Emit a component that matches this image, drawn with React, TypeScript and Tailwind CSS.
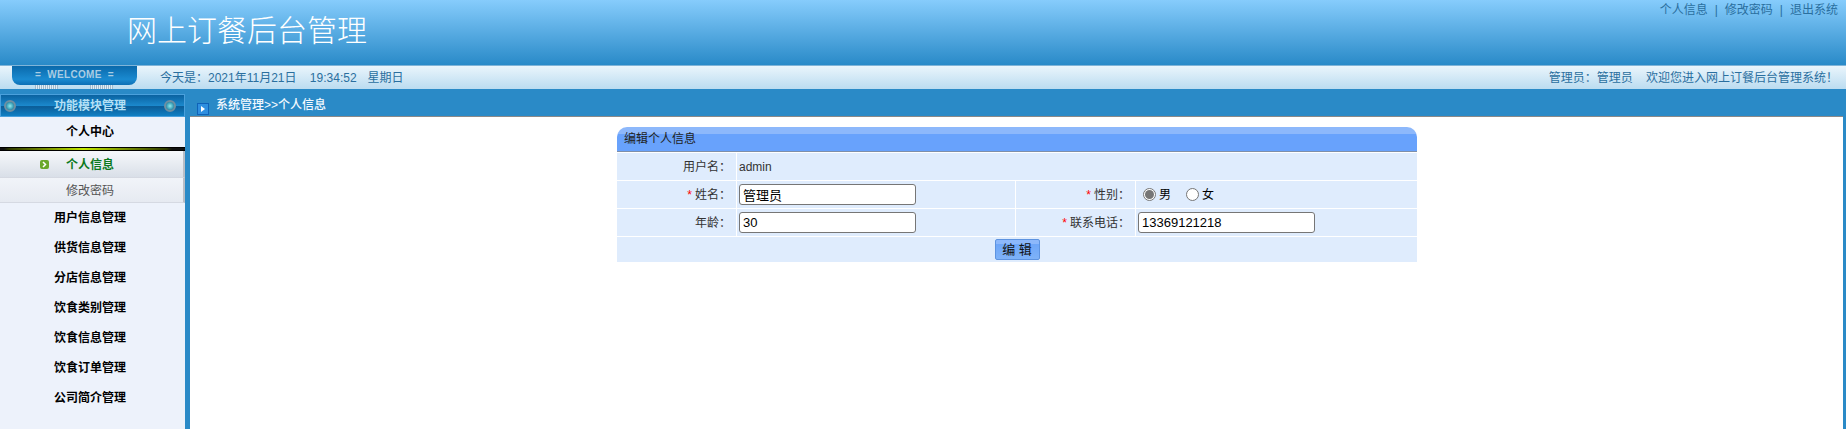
import React from "react";

const F = { fontFamily: '"Liberation Sans","Noto Sans CJK SC",sans-serif' };

function Knob() {
  return (
    <span className="block w-[12px] h-[12px] rounded-full border-2 border-[#6f8fa2] bg-[radial-gradient(circle,#8fecf0_0%,#3a9db5_60%,#0f5f88_100%)]" />
  );
}

const menus = ["用户信息管理", "供货信息管理", "分店信息管理", "饮食类别管理", "饮食信息管理", "饮食订单管理", "公司简介管理"];

function Star() {
  return <span className="text-[#ff0000] mr-[3px]">*</span>;
}

function Field({ value }: { value: string }) {
  return (
    <input
      readOnly
      value={value}
      className="w-[177px] h-[21px] bg-white border border-[#767676] rounded-[3px] px-[3px] text-[13px] text-black outline-none"
    />
  );
}

function Radio({ on }: { on?: boolean }) {
  return (
    <span className="w-[13px] h-[13px] rounded-full border border-[#767676] bg-white flex items-center justify-center">
      {on && <span className="w-[9px] h-[9px] rounded-full bg-[#767676]" />}
    </span>
  );
}

export default function App() {
  return (
    <div style={F} className="w-[1846px] h-[429px] overflow-hidden flex flex-col bg-[#2a8ac7] text-[12px]">
      <header className="h-[65px] shrink-0 flex justify-between bg-[linear-gradient(#86ccfc,#298ac8)]">
        <h1 className="pl-[127px] pt-[11px] text-[30px] leading-[40px] font-light text-white">网上订餐后台管理</h1>
        <nav className="pr-[8px] pt-[2px] text-[#2a6f9f] flex gap-[7px] leading-[16px]">
          <span>个人信息</span><span>|</span><span>修改密码</span><span>|</span><span>退出系统</span>
        </nav>
      </header>

      <div className="h-[24px] shrink-0 border-t border-[#7fb4d8] flex items-center justify-between bg-[linear-gradient(#eaf5fc,#bbdcf0)] text-[#2a6f9f]">
        <div className="flex items-start h-full self-start">
          <div className="relative ml-[12px] w-[125px] h-[19px] rounded-b-[8px] bg-[linear-gradient(#0a69ab,#1a8ad0_70%,#0d6fb5)] text-center text-[#a9cde4] font-bold text-[10px] leading-[18px] tracking-[0.3px] whitespace-pre">
            {"=  WELCOME  ="}
            <span className="absolute left-[23px] top-[19px] w-[23px] h-[4px] bg-[repeating-linear-gradient(90deg,#9fb9cc_0_1px,#e0edf6_1px_2px)]" />
            <span className="absolute left-[78px] top-[19px] w-[23px] h-[4px] bg-[repeating-linear-gradient(90deg,#9fb9cc_0_1px,#e0edf6_1px_2px)]" />
          </div>
          <div className="ml-[23px] pt-[4px] whitespace-pre leading-[16px]">今天是：2021年11月21日{"    "}19:34:52<span className="ml-[11px]">星期日</span></div>
        </div>
        <div className="pr-[8px] whitespace-pre">管理员：管理员{"    "}欢迎您进入网上订餐后台管理系统！</div>
      </div>

      <div className="flex-1 flex min-h-0">
        <aside className="w-[185px] shrink-0 mt-[5px] flex flex-col">
          <div className="h-[23px] shrink-0 border border-[#4aa0dc] flex items-center justify-between pl-[3px] pr-[8px] bg-[linear-gradient(#0a62a0,#1b88cc_50%,#0b5d98_55%,#1080c4)] text-[#b5e0f5] font-bold">
            <Knob />
            <span>功能模块管理</span>
            <Knob />
          </div>
          <div className="flex-1 bg-[#edf2fb] flex flex-col">
            <div className="h-[30px] pr-[5px] flex items-center justify-center font-bold text-black">个人中心</div>
            <div className="h-[4px] border-y border-black bg-[linear-gradient(90deg,#111_0%,#111_2%,#2e3a00_5%,#c4ea00_45%,#2e3a00_90%,#111_93%,#111_100%)]" />
            <div className="h-[26px] relative pr-[3px] pt-[2px] flex items-center justify-center font-bold text-[#0b7a1e] bg-[linear-gradient(#f6f8fb,#d9dfe8)] border-r-2 border-[#b9bec6]">
              <span className="absolute left-[40px] top-[9px] w-[9px] h-[9px] rounded-[2px] bg-[#6aa82c] flex items-center justify-center">
                <svg width="7" height="7" viewBox="0 0 7 7" fill="none" stroke="#fff" strokeWidth="1.5"><path d="M2 1l2.5 2.5L2 6" /></svg>
              </span>
              个人信息
            </div>
            <div className="h-[26px] pr-[3px] pt-[2px] flex items-center justify-center text-[#555] bg-[linear-gradient(#f1f4f9,#e6eaf1)] border-y border-[#d5d9e2] border-r-2 border-r-[#b9bec6]">修改密码</div>
            <div className="flex flex-col">
              {menus.map((m) => (
                <div key={m} className="h-[30px] pr-[5px] flex items-center justify-center font-bold text-black">{m}</div>
              ))}
            </div>
          </div>
        </aside>

        <div className="w-[5px] shrink-0" />

        <main className="flex-1 flex flex-col min-w-0 pr-[3px]">
          <div className="h-[27px] shrink-0 relative pl-[26px] pt-[8px] text-[#f2f9ff] font-medium leading-[16px]">
            <span className="absolute left-[7px] top-[14px] w-[12px] h-[12px] bg-[#2e8fe0] border border-[#0f62b8] flex items-center justify-center">
              <svg width="6" height="6" viewBox="0 0 6 6" fill="#fff"><path d="M1 0l4 3-4 3z" /></svg>
            </span>
            系统管理&gt;&gt;个人信息
          </div>
          <div className="flex-1 bg-white border-t border-[#8a8a8a] pt-[10px] flex justify-center">
            <div className="w-[800px] ml-[1px] self-start text-[#333]">
              <div className="h-[25px] rounded-t-[10px] bg-[linear-gradient(#8db8fb,#8db8fb_7px,#68a2fc_7px,#68a2fc)] border-b border-[#7f8fa8] pl-[7px] leading-[24px] text-[#222]">编辑个人信息</div>
              <div className="grid grid-cols-[120px_279px_120px_1fr] gap-y-[1px] pt-[1px] bg-white [&>div]:bg-[#dfecfd]">
                <div className="h-[27px] flex items-center justify-end pr-[5px] border-r border-white">用户名：</div>
                <div className="h-[27px] col-span-3 flex items-center pl-[2px]">admin</div>

                <div className="h-[27px] flex items-center justify-end pr-[5px] border-r border-white"><Star />姓名：</div>
                <div className="h-[27px] flex items-center pl-[2px] border-r border-white"><Field value="管理员" /></div>
                <div className="h-[27px] flex items-center justify-end pr-[5px] border-r border-white"><Star />性别：</div>
                <div className="h-[27px] flex items-center pl-[7px] text-black">
                  <Radio on /><span className="ml-[3px] mr-[15px]">男</span><Radio /><span className="ml-[3px]">女</span>
                </div>

                <div className="h-[27px] flex items-center justify-end pr-[5px] border-r border-white">年龄：</div>
                <div className="h-[27px] flex items-center pl-[2px] border-r border-white"><Field value="30" /></div>
                <div className="h-[27px] flex items-center justify-end pr-[5px] border-r border-white"><Star />联系电话：</div>
                <div className="h-[27px] flex items-center pl-[2px]"><Field value="13369121218" /></div>

                <div className="h-[25px] col-span-4 flex items-center justify-center">
                  <button className="w-[45px] h-[21px] rounded-[2px] border border-[#5d93e0] bg-[linear-gradient(#8db8fb,#8db8fb_4px,#6ea6f8_4px,#7eb2f8)] text-[13px] text-[#111] leading-[19px]">编 辑</button>
                </div>
              </div>
            </div>
          </div>
        </main>
      </div>
    </div>
  );
}
